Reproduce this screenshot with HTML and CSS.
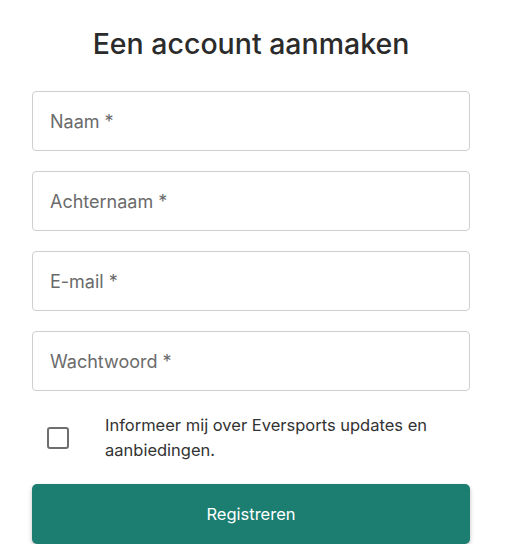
FILE: index.html
```html
<!DOCTYPE html>
<html lang="nl">
<head>
<meta charset="UTF-8" />
<meta name="viewport" content="width=device-width, initial-scale=1" />
<title>Een account aanmaken</title>
<link rel="stylesheet" href="styles.css">
</head>
<body>

<main class="signup">
  <h1>Een account aanmaken</h1>
  <form class="signup-form">
    <input type="text" placeholder="Naam *" />
    <input type="text" placeholder="Achternaam *" />
    <input type="email" placeholder="E-mail *" />
    <input type="password" placeholder="Wachtwoord *" />
    <label class="optin">
      <span class="optin-box"><input type="checkbox" /></span>
      <span class="optin-text">Informeer mij over Eversports updates en aanbiedingen.</span>
    </label>
    <button type="submit">Registreren</button>
  </form>
</main>

</body>
</html>
```

FILE: styles.css
```css
body {
  font-family: Inter, 'Noto Sans', sans-serif;
  margin: 0; background: #fff; color: #333;
}
.signup {
  width: 438px;
  margin-left: 32px;
  padding-top: 25px;
}
.signup h1 {
  margin: 0 0 28px;
  text-align: center;
  font-size: 28.5px;
  font-weight: 500;
  line-height: 38px;
  color: #2b2b2b;
}
.signup-form {
  display: flex; flex-direction: column; gap: 20px;
}
.signup-form input[type=text],
.signup-form input[type=email],
.signup-form input[type=password] {
  height: 60px;
  box-sizing: border-box;
  padding: 0 17px;
  border: 1px solid #cfcfcf; border-radius: 4px;
  font-family: inherit; font-size: 18px;
  color: #333;
}
.signup-form input::placeholder {
  color: #6b6b6b;
}
.optin {
  display: flex; align-items: center;
  padding: 2px 0 0 15px;
  margin-bottom: 1px;
}
.optin-box {
  width: 58px; flex: none;
}
.optin-box input {
  appearance: none;
  width: 22px; height: 22px; margin: 0;
  border: 2px solid #6e6e6e; border-radius: 3px;
  display: block;
}
.optin-text {
  font-size: 16.5px; line-height: 25px; color: #333;
}
button {
  height: 60px;
  background: #1b7e71;
  border: none; border-radius: 5px;
  color: white; font-family: inherit; font-size: 16.5px;
  box-shadow: 0 2px 4px rgba(0,0,0,0.25);
  cursor: pointer;
}
```
